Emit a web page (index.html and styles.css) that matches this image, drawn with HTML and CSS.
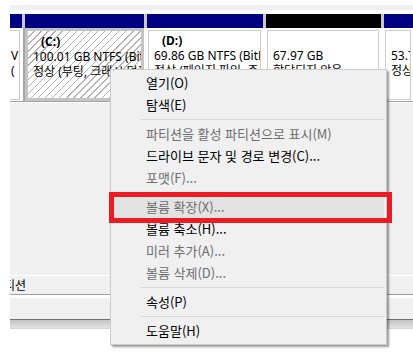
FILE: index.html
```html
<!DOCTYPE html>
<html lang="ko">
<head>
    <meta charset="UTF-8">
    <meta name="viewport" content="width=device-width, initial-scale=1.0">
    <title>디스크 관리</title>
    <link rel="stylesheet" href="styles.css">
</head>
<body>
    <div class="screen">
        <div class="top">
            <div class="strip"></div>
        </div>

        <div class="disk">
            <div class="head"></div>
            <div class="head"></div>
            <div class="head"></div>
            <div class="head unalloc"></div>
            <div class="head"></div>

            <div class="part edge">
                <p>&nbsp;</p>
                <p>V</p>
                <p>(</p>
            </div>
            <div class="part selected">
                <p class="name">(C:)</p>
                <p>100.01 GB NTFS (BitLocker 암호화됨)</p>
                <p>정상 (부팅, 크래시 덤프, 주 파티션)</p>
            </div>
            <div class="part">
                <p class="name">(D:)</p>
                <p>69.86 GB NTFS (BitLocker 암호화됨)</p>
                <p>정상 (페이지 파일, 주 파티션)</p>
            </div>
            <div class="part">
                <p>&nbsp;</p>
                <p>67.97 GB</p>
                <p>할당되지 않음</p>
            </div>
            <div class="part">
                <p>&nbsp;</p>
                <p>53.71 GB</p>
                <p>정상 (주 파티션)</p>
            </div>
        </div>

        <div class="area"></div>
        <div class="legend"><span>파티션</span></div>
        <div class="footer">
            <div class="bar"></div>
            <div class="shade"></div>
        </div>

        <!-- context menu -->
        <div class="menu">
            <div class="item">열기(O)</div>
            <div class="item">탐색(E)</div>
            <div class="sep"></div>
            <div class="item off">파티션을 활성 파티션으로 표시(M)</div>
            <div class="item">드라이브 문자 및 경로 변경(C)...</div>
            <div class="item off">포맷(F)...</div>
            <div class="sep"></div>
            <div class="item off hot">볼륨 확장(X)...</div>
            <div class="item">볼륨 축소(H)...</div>
            <div class="item off">미러 추가(A)...</div>
            <div class="item off">볼륨 삭제(D)...</div>
            <div class="sep"></div>
            <div class="item">속성(P)</div>
            <div class="sep"></div>
            <div class="item">도움말(H)</div>
        </div>
        <div class="mark"></div>
    </div>
</body>
</html>
```

FILE: styles.css
```css
body {
    margin: 0;
    background-color: #fff;
    font-family: "Noto Sans", "Noto Sans CJK KR", sans-serif;
    font-size: 12px;
    color: #000;
}

.screen {
    position: relative;
    width: 413px;
    height: 360px;
    overflow: hidden;
}

.top {
    height: 9px;
    padding: 5px 0 0 10px;
}
.strip {
    height: 5px;
    background-color: #f0f0f0;
}

/* disk row */
.disk {
    margin-left: 10px;
    display: grid;
    grid-template-columns: 12px 119px 116px 115px 1fr;
    grid-template-rows: 14px 73px;
    column-gap: 3px;
    background: linear-gradient(#c8c8c8 14px, #fff 14px);
    border-bottom: 1px solid #a0a0a0;
    box-shadow: 0 1px 0 #fff;
}

.head {
    background-color: #000080;
}
.head.unalloc {
    background-color: #000;
}

.part {
    margin: 2px 2px 1px 1px;
    padding: 2px 0 0 5px;
    border: 1px solid #cdcdcd;
    background-color: #fff;
    overflow: hidden;
    white-space: nowrap;
}
.part p {
    margin: 0;
    line-height: 15px;
}
.part .name {
    padding-left: 8px;
    font-weight: bold;
}
.part.edge {
    margin-left: 0;
    padding-left: 1px;
    border-left: none;
}
.part.selected {
    margin: 0;
    padding: 3px 0 0 5px;
    border: 3px solid #c4c4c4;
    box-shadow: -2px 0 0 #a6a6a6, 0 1px 0 #a6a6a6;
    background: repeating-linear-gradient(135deg, #fff 0 4px, #b4b4b4 4px 5px);
}

.area {
    margin-left: 10px;
    margin-top: 1px;
    height: 172px;
    background-color: #f0f0f0;
    border-bottom: 1px solid #fff;
}

.legend {
    margin-left: 10px;
    height: 18px;
    line-height: 17px;
    background-color: #f0f0f0;
    border-bottom: 1px solid #a0a0a0;
    overflow: hidden;
    white-space: nowrap;
    font-family: "Noto Sans CJK KR", sans-serif;
}
.legend span {
    margin-left: -17px;
}

.footer {
    margin-left: 10px;
}
.footer .bar {
    height: 21px;
    margin-top: 2px;
    background-color: #f0f0f0;
    border-top: 1px solid #fff;
    border-bottom: 1px solid #707070;
}
.footer .shade {
    height: 8px;
    background: linear-gradient(#c4c4c4, #e2e2e2);
    border-bottom: 1px solid #d6d6d6;
}

/* context menu */
.menu {
    position: absolute;
    left: 110px;
    top: 69px;
    width: 275px;
    padding: 2px 0;
    background-color: #f0f0f0;
    border: 1px solid #cccccc;
    box-shadow: 2px 2px 2px rgba(0, 0, 0, 0.4);
    font-family: "Noto Sans CJK KR", sans-serif;
    font-size: 13px;
}
.item {
    height: 22px;
    line-height: 22px;
    margin: 0 2px;
    padding-left: 33px;
    white-space: nowrap;
}
.item.off {
    color: #6d6d6d;
}
.item.hot {
    background-color: #e3e3e3;
}
.sep {
    height: 7px;
    margin: 0 2px 0 30px;
    background: linear-gradient(transparent 3px, #d7d7d7 3px, #d7d7d7 4px, transparent 4px);
}

.mark {
    position: absolute;
    left: 109px;
    top: 192px;
    width: 273px;
    height: 21px;
    border: 5px solid #ed1c24;
}
```
